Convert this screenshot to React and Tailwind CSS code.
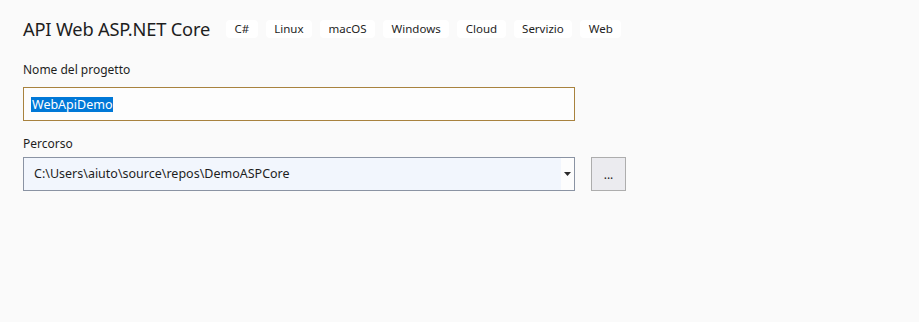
import React from "react";

const tags = ["C#", "Linux", "macOS", "Windows", "Cloud", "Servizio", "Web"];

export default function App() {
  return (
    <div
      className="w-[919px] h-[322px] bg-[#fafafa] text-[#1e1e1e] pl-[23px] pt-[19px]"
      style={{ fontFamily: '"Noto Sans", "Open Sans", sans-serif' }}
    >
      <div className="flex items-center h-[20px]">
        <h1 className="text-[18.3px] leading-[20px] text-[#1e1e1e] mr-[16px] tracking-[-0.2px]">
          API Web ASP.NET Core
        </h1>
        <div className="flex gap-[8px]">
          {tags.map((t) => (
            <span
              key={t}
              className="h-[18px] px-[8.5px] rounded-[4px] bg-white text-[11.5px] leading-[18px] text-[#1e1e1e] flex items-center"
            >
              {t}
            </span>
          ))}
        </div>
      </div>

      <div className="mt-[23px] text-[12px] leading-[16px] text-[#1e1e1e]">Nome del progetto</div>
      <div className="mt-[9px] w-[552px] h-[34px] border border-[#a8823e] bg-[#fdfdfd] flex items-center pl-[7px]">
        <span className="bg-[#0078d7] text-white text-[12.5px] leading-[15px] px-[1px]">WebApiDemo</span>
      </div>

      <div className="mt-[15px] text-[12px] leading-[16px] text-[#1e1e1e]">Percorso</div>
      <div className="mt-[5px] flex items-center">
        <div className="w-[552px] h-[34px] border border-[#8a93a3] bg-[#f2f6fd] flex items-center">
          <span className="flex-1 pl-[10px] text-[12.5px] text-[#1e1e1e]">
            C:\Users\aiuto\source\repos\DemoASPCore
          </span>
          <div className="w-[13px] h-full bg-[#fdfdfd] flex items-center justify-center">
            <svg width="7" height="4" viewBox="0 0 7 4">
              <path d="M0 0 H7 L3.5 4 Z" fill="#2b2b2b" />
            </svg>
          </div>
        </div>
        <div className="ml-[16px] w-[35px] h-[34px] border border-[#adadad] bg-[#ebebef] flex items-center justify-center text-[12px] text-[#1e1e1e] leading-none pt-[2px]">
          ...
        </div>
      </div>
    </div>
  );
}
